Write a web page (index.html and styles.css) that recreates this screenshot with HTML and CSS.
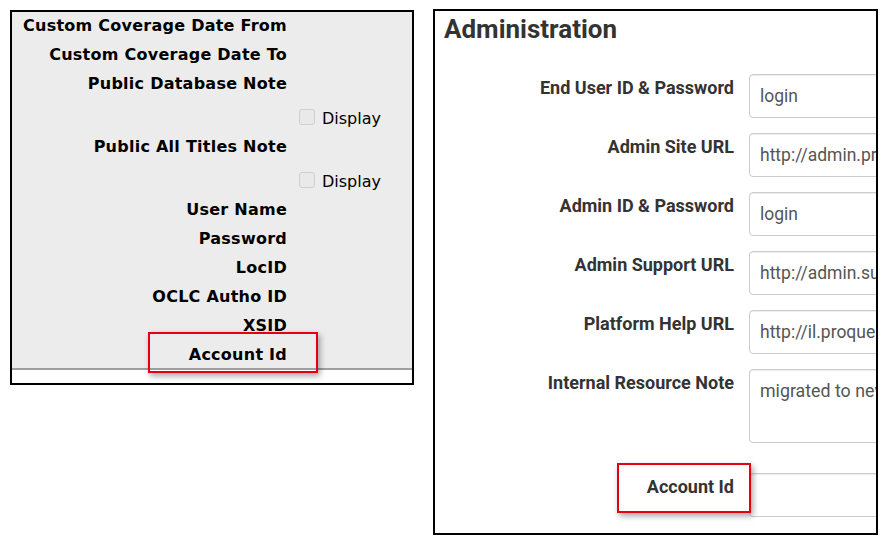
FILE: index.html
```html
<!DOCTYPE html>
<html lang="en">
<head>
  <meta charset="UTF-8">
  <meta name="viewport" content="width=device-width, initial-scale=1.0">
  <title>Account Id field comparison</title>
  <link rel="stylesheet" href="styles.css">
</head>
<body>
  <div class="page">
    <!-- Old resource screen -->
    <div class="panel legacy">
      <div class="legacy-form">
        <div class="row"><span class="name">Custom Coverage Date From</span></div>
        <div class="row"><span class="name">Custom Coverage Date To</span></div>
        <div class="row"><span class="name">Public Database Note</span></div>
        <div class="row check-row">
          <span class="name"></span>
          <label class="check"><input type="checkbox" disabled> Display</label>
        </div>
        <div class="row"><span class="name">Public All Titles Note</span></div>
        <div class="row check-row">
          <span class="name"></span>
          <label class="check"><input type="checkbox" disabled> Display</label>
        </div>
        <div class="row"><span class="name">User Name</span></div>
        <div class="row"><span class="name">Password</span></div>
        <div class="row"><span class="name">LocID</span></div>
        <div class="row"><span class="name">OCLC Autho ID</span></div>
        <div class="row"><span class="name">XSID</span></div>
        <div class="row"><span class="name">Account Id</span></div>
      </div>
      <div class="legacy-footer"></div>
      <div class="callout callout-legacy"></div>
    </div>

    <!-- New administration screen -->
    <div class="panel admin">
      <h2>Administration</h2>
      <div class="admin-form">
        <label class="field-label">End User ID &amp; Password</label>
        <input class="field" type="text" value="login">

        <label class="field-label">Admin Site URL</label>
        <input class="field" type="text" value="http://admin.proquest.com">

        <label class="field-label">Admin ID &amp; Password</label>
        <input class="field" type="text" value="login">

        <label class="field-label">Admin Support URL</label>
        <input class="field" type="text" value="http://admin.support.proquest.com">

        <label class="field-label">Platform Help URL</label>
        <input class="field" type="text" value="http://il.proquest.com">

        <label class="field-label">Internal Resource Note</label>
        <textarea class="field note">migrated to new platform</textarea>

        <label class="field-label spaced">Account Id</label>
        <input class="field spaced" type="text" value="">
      </div>
      <div class="callout callout-admin"></div>
    </div>
  </div>
</body>
</html>
```

FILE: styles.css
```css
body {
  margin: 0;
  padding: 0;
  background: #fff;
}

.page {
  display: flex;
  align-items: flex-start;
  padding: 10px 0 0 10px;
}

.panel {
  position: relative;
  box-sizing: border-box;
  border: 2px solid #000;
  overflow: hidden;
}

/* left: old screen */
.legacy {
  width: 404px;
  height: 375px;
  background: #fff;
  font-family: 'DejaVu Sans', Verdana, sans-serif;
  color: #000;
}

.legacy-form {
  background: #ececec;
  height: 357px;
  padding-top: 0;
  box-sizing: border-box;
}

.legacy-footer {
  height: 2px;
  background: #9e9e9e;
}

.row {
  display: flex;
  align-items: center;
  height: 29px;
}

.row:first-child {
  margin-top: -1px;
}

.row .name {
  width: 275px;
  flex: none;
  text-align: right;
  font-weight: bold;
  font-size: 16px;
  letter-spacing: 0.25px;
}

.check-row {
  height: 34px;
  align-items: flex-start;
}

.check {
  display: flex;
  align-items: center;
  margin-left: 12px;
  padding-top: 9px;
  font-size: 16px;
  line-height: 23px;
}

.check input {
  appearance: none;
  -webkit-appearance: none;
  width: 16px;
  height: 16px;
  margin: 0 7px 4px 0;
  border: 1px solid #cfcfcf;
  border-radius: 3px;
  background: #e9e9e9;
  box-sizing: border-box;
}

/* right: new screen */
.admin {
  width: 445px;
  height: 526px;
  margin-left: 19px;
  margin-top: -1px;
  background: #fff;
  font-family: Roboto, 'Liberation Sans', sans-serif;
  color: #333;
}

.admin h2 {
  margin: 0;
  padding-left: 9px;
  font-size: 26px;
  font-weight: bold;
  line-height: 36px;
}

.admin-form {
  display: grid;
  grid-template-columns: 299px 320px;
  column-gap: 15px;
  row-gap: 15px;
  margin-top: 27px;
}

.field-label {
  text-align: right;
  font-weight: bold;
  font-size: 18px;
  line-height: 22px;
  padding-top: 3px;
}

.field {
  box-sizing: border-box;
  height: 44px;
  padding: 0 10px;
  border: 1px solid #ccc;
  border-radius: 4px;
  box-shadow: inset 0 1px 1px rgba(0, 0, 0, 0.075);
  font-family: Roboto, 'Liberation Sans', sans-serif;
  font-size: 17.5px;
  color: #555;
  background: #fff;
  outline: none;
}

.field.note {
  height: 74px;
  padding-top: 9px;
  resize: none;
  line-height: 24px;
  overflow: hidden;
  font-size: 17.8px;
}

.spaced {
  margin-top: 15px;
}

/* red highlight boxes */
.callout {
  position: absolute;
  box-sizing: border-box;
  border: 2px solid #e4000f;
  box-shadow: 2px 3px 6px rgba(0, 0, 0, 0.35);
}

.callout-legacy {
  left: 136px;
  top: 320px;
  width: 170px;
  height: 41px;
}

.callout-admin {
  left: 182px;
  top: 452px;
  width: 134px;
  height: 50px;
}
```
